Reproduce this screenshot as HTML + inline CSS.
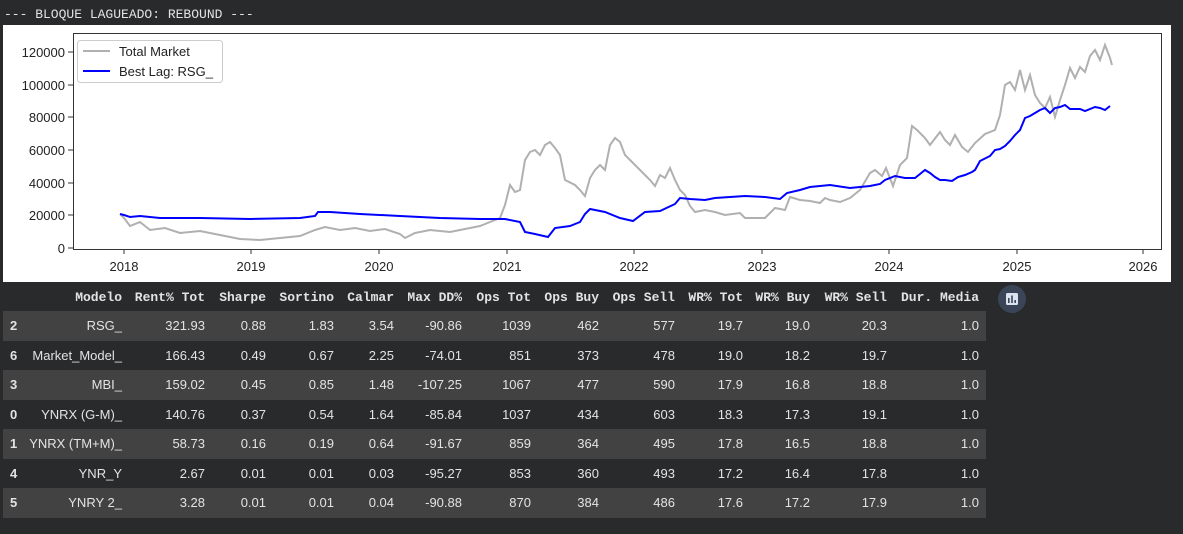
<!DOCTYPE html>
<html><head><style>
body{margin:0;background:#282a2c;width:1183px;height:534px;overflow:hidden;position:relative;font-family:"Liberation Sans",sans-serif}
.pre{position:absolute;left:4px;top:7px;font:13px "Liberation Mono",monospace;color:#e3e3e3;white-space:pre}
.panel{position:absolute;left:3px;top:25px;width:1168px;height:257px;background:#fff}
table{position:absolute;left:3px;top:284px;border-collapse:collapse;color:#e3e3e3;font-size:13px;table-layout:fixed;width:983px}
th{font:bold 13px "Liberation Mono",monospace;text-align:right;height:27px;padding:0;white-space:nowrap}
td{height:29.5px;padding:0;text-align:right;white-space:nowrap}
th:last-child,td:last-child{padding-right:7px}
tbody tr:nth-child(odd){background:#424242}
td:first-child{text-align:left;padding-left:7px;font-weight:bold}
.ic{position:absolute;left:998px;top:285px;width:28px;height:28px;border-radius:50%;background:#3a4657}
</style></head><body>
<div class="pre">--- BLOQUE LAGUEADO: REBOUND ---</div>
<div class="panel"></div>
<svg style="position:absolute;left:0;top:0" width="1183" height="290" font-family="Liberation Sans, sans-serif" font-size="13" fill="#222">
<rect x="73.5" y="33.5" width="1088" height="216" fill="none" stroke="#333" stroke-width="1"/>
<g stroke="#333">
<line x1="68" x2="73" y1="52" y2="52"/><line x1="68" x2="73" y1="85" y2="85"/><line x1="68" x2="73" y1="117" y2="117"/><line x1="68" x2="73" y1="150" y2="150"/><line x1="68" x2="73" y1="183" y2="183"/><line x1="68" x2="73" y1="215" y2="215"/><line x1="68" x2="73" y1="248" y2="248"/>
<line y1="249" y2="254" x1="124" x2="124"/><line y1="249" y2="254" x1="251" x2="251"/><line y1="249" y2="254" x1="379" x2="379"/><line y1="249" y2="254" x1="507" x2="507"/><line y1="249" y2="254" x1="634" x2="634"/><line y1="249" y2="254" x1="762" x2="762"/><line y1="249" y2="254" x1="889" x2="889"/><line y1="249" y2="254" x1="1017" x2="1017"/><line y1="249" y2="254" x1="1143" x2="1143"/>
</g>
<g text-anchor="end"><text x="65" y="57">120000</text><text x="65" y="90">100000</text><text x="65" y="122">80000</text><text x="65" y="155">60000</text><text x="65" y="188">40000</text><text x="65" y="220">20000</text><text x="65" y="253">0</text></g>
<g text-anchor="middle"><text x="124" y="271">2018</text><text x="251" y="271">2019</text><text x="379" y="271">2020</text><text x="507" y="271">2021</text><text x="634" y="271">2022</text><text x="762" y="271">2023</text><text x="889" y="271">2024</text><text x="1017" y="271">2025</text><text x="1143" y="271">2026</text></g>
<polyline fill="none" stroke="#b0b0b0" stroke-width="2" points="120,214 124,218 130,226 140,222 150,230 165,228 180,233 200,231 220,235 240,239 260,240 280,238 300,236 315,230 325,227 340,230 355,228 370,231 385,229 400,234 405,238 415,233 430,230 450,232 470,228 480,226 490,222 500,218 505,205 510,185 515,192 520,190 525,160 530,152 535,150 540,155 545,145 550,142 555,148 560,155 565,180 575,185 580,190 585,196 590,178 595,170 600,165 605,170 610,145 615,138 620,142 625,155 635,165 645,175 650,180 655,186 660,175 665,178 670,168 675,180 680,190 685,195 690,206 695,212 705,210 715,212 725,215 740,213 745,218 765,218 775,208 785,210 790,197 800,200 810,201 820,203 825,198 830,200 840,202 850,198 860,190 870,173 875,170 882,176 886,168 893,186 900,165 907,158 912,126 917,130 925,138 930,145 940,132 945,140 950,145 955,135 962,147 968,152 975,143 985,134 995,130 1000,115 1005,85 1010,82 1015,90 1020,70 1025,90 1030,75 1035,95 1040,103 1045,108 1050,97 1055,117 1060,100 1065,85 1070,68 1075,78 1080,67 1085,72 1090,56 1095,50 1100,60 1105,45 1110,58 1112,65"/>
<polyline fill="none" stroke="#0000ff" stroke-width="2" points="120,214 124,215 130,217 140,216 160,218 200,218 250,219 300,218 315,216 318,212 330,212 360,214 400,216 440,218 480,219 505,219 520,222 525,232 535,234 548,237 555,228 570,226 580,222 585,214 590,209 605,212 620,218 633,221 645,212 660,211 675,204 680,198 690,199 705,200 715,198 745,196 765,197 780,199 787,193 800,190 810,187 830,185 850,188 870,186 880,184 885,180 895,176 905,178 915,178 920,174 925,170 930,173 935,177 940,180 945,180 952,181 958,177 965,175 972,172 975,170 980,161 990,156 995,150 1000,149 1005,146 1010,141 1015,135 1020,130 1025,118 1030,116 1035,113 1040,110 1045,108 1050,113 1055,108 1060,107 1065,105 1070,109 1080,109 1085,111 1095,107 1100,108 1105,110 1110,106"/>
<rect x="77.5" y="40.5" width="145" height="42" rx="3" fill="#fff" stroke="#ccc"/>
<line x1="83" x2="110" y1="51" y2="51" stroke="#b0b0b0" stroke-width="2"/>
<line x1="83" x2="110" y1="71" y2="71" stroke="#0000ff" stroke-width="2"/>
<text x="119" y="56">Total Market</text><text x="119" y="76">Best Lag: RSG_</text>
</svg>
<table>
<colgroup><col style="width:22px"><col style="width:97px"><col style="width:83px"><col style="width:61px"><col style="width:68px"><col style="width:60px"><col style="width:68px"><col style="width:69px"><col style="width:68px"><col style="width:76px"><col style="width:68px"><col style="width:67px"><col style="width:77px"><col style="width:99px"></colgroup>
<thead><tr><th></th><th>Modelo</th><th>Rent% Tot</th><th>Sharpe</th><th>Sortino</th><th>Calmar</th><th>Max DD%</th><th>Ops Tot</th><th>Ops Buy</th><th>Ops Sell</th><th>WR% Tot</th><th>WR% Buy</th><th>WR% Sell</th><th>Dur. Media</th></tr></thead>
<tbody>
<tr><td>2</td><td>RSG_</td><td>321.93</td><td>0.88</td><td>1.83</td><td>3.54</td><td>-90.86</td><td>1039</td><td>462</td><td>577</td><td>19.7</td><td>19.0</td><td>20.3</td><td>1.0</td></tr>
<tr><td>6</td><td>Market_Model_</td><td>166.43</td><td>0.49</td><td>0.67</td><td>2.25</td><td>-74.01</td><td>851</td><td>373</td><td>478</td><td>19.0</td><td>18.2</td><td>19.7</td><td>1.0</td></tr>
<tr><td>3</td><td>MBI_</td><td>159.02</td><td>0.45</td><td>0.85</td><td>1.48</td><td>-107.25</td><td>1067</td><td>477</td><td>590</td><td>17.9</td><td>16.8</td><td>18.8</td><td>1.0</td></tr>
<tr><td>0</td><td>YNRX (G-M)_</td><td>140.76</td><td>0.37</td><td>0.54</td><td>1.64</td><td>-85.84</td><td>1037</td><td>434</td><td>603</td><td>18.3</td><td>17.3</td><td>19.1</td><td>1.0</td></tr>
<tr><td>1</td><td>YNRX (TM+M)_</td><td>58.73</td><td>0.16</td><td>0.19</td><td>0.64</td><td>-91.67</td><td>859</td><td>364</td><td>495</td><td>17.8</td><td>16.5</td><td>18.8</td><td>1.0</td></tr>
<tr><td>4</td><td>YNR_Y</td><td>2.67</td><td>0.01</td><td>0.01</td><td>0.03</td><td>-95.27</td><td>853</td><td>360</td><td>493</td><td>17.2</td><td>16.4</td><td>17.8</td><td>1.0</td></tr>
<tr><td>5</td><td>YNRY 2_</td><td>3.28</td><td>0.01</td><td>0.01</td><td>0.04</td><td>-90.88</td><td>870</td><td>384</td><td>486</td><td>17.6</td><td>17.2</td><td>17.9</td><td>1.0</td></tr>
</tbody></table>
<div class="ic"><svg width="28" height="28"><rect x="8" y="8" width="12" height="12" rx="1.5" fill="#dce3f0"/><g fill="#3a4657"><rect x="10" y="13" width="1.6" height="5"/><rect x="13.2" y="10.5" width="1.6" height="7.5"/><rect x="16.4" y="15" width="1.6" height="3"/></g></svg></div>
</body></html>
